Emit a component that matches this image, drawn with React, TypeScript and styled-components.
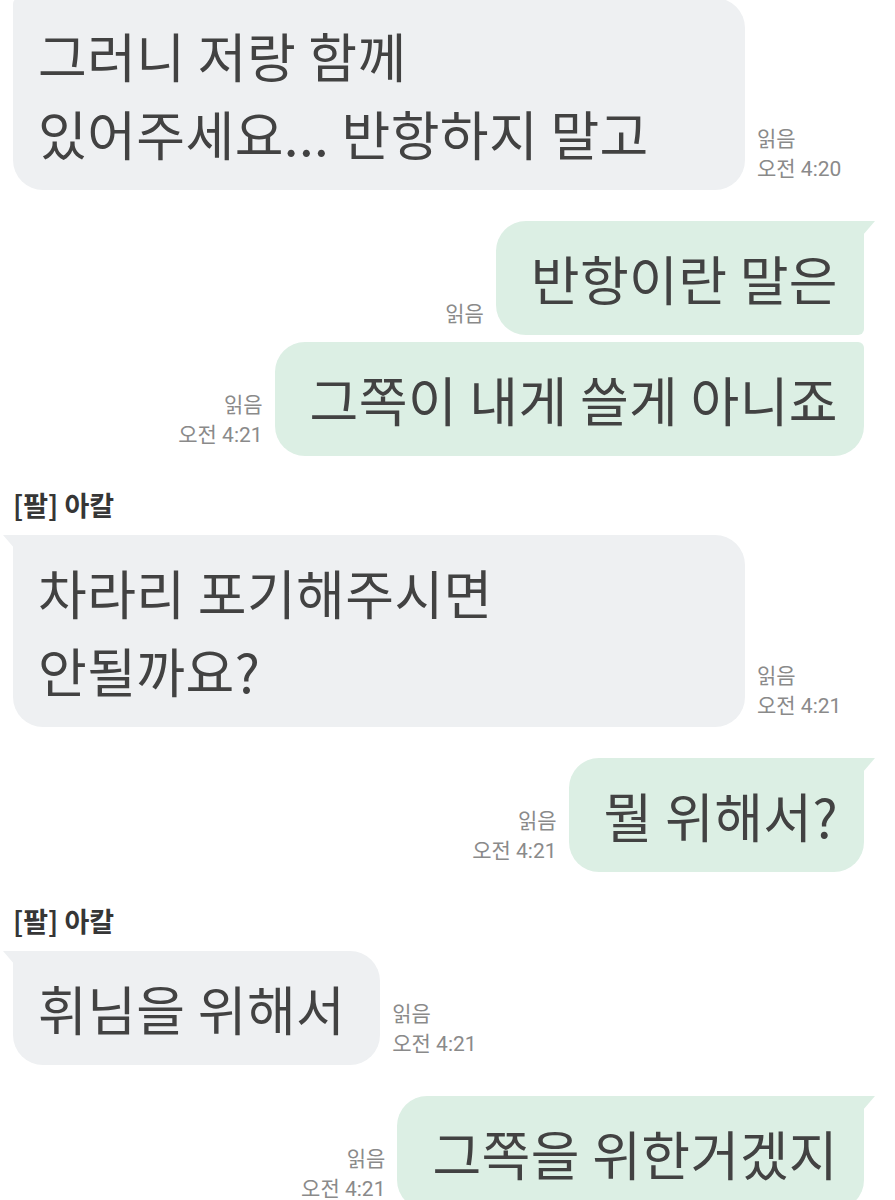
import { createGlobalStyle, css } from "styled-components"
import styled from "styled-components"

const GlobalStyle = createGlobalStyle`
  html, body {
    margin: 0;
    padding: 0;
    background: #ffffff;
  }
  body {
    font-family: "Noto Sans CJK KR", "Noto Sans", sans-serif;
    overflow: hidden;
  }
`

const FONT = `"Noto Sans CJK KR", "Noto Sans", sans-serif`

type Corner = "tail" | "join" | "free"

type Msg = {
  mine?: boolean
  lines: string[]
  wide?: boolean
  top: Corner
  bottom: "join" | "free"
  read?: boolean
  time?: string
}

type Block = { sender?: string; messages: Msg[] }

const thread: Block[] = [
  {
    messages: [
      {
        lines: ["그러니 저랑 함께", "있어주세요... 반항하지 말고"],
        wide: true,
        top: "join",
        bottom: "free",
        read: true,
        time: "오전 4:20",
      },
    ],
  },
  {
    messages: [
      { mine: true, lines: ["반항이란 말은"], top: "tail", bottom: "join", read: true },
      {
        mine: true,
        lines: ["그쪽이 내게 쓸게 아니죠"],
        top: "join",
        bottom: "free",
        read: true,
        time: "오전 4:21",
      },
    ],
  },
  {
    sender: "[팔] 아칼",
    messages: [
      {
        lines: ["차라리 포기해주시면", "안될까요?"],
        wide: true,
        top: "tail",
        bottom: "free",
        read: true,
        time: "오전 4:21",
      },
    ],
  },
  {
    messages: [
      { mine: true, lines: ["뭘 위해서?"], top: "tail", bottom: "free", read: true, time: "오전 4:21" },
    ],
  },
  {
    sender: "[팔] 아칼",
    messages: [
      { lines: ["휘님을 위해서"], top: "tail", bottom: "free", read: true, time: "오전 4:21" },
    ],
  },
  {
    messages: [
      { mine: true, lines: ["그쪽을 위한거겠지"], top: "tail", bottom: "free", read: true, time: "오전 4:21" },
    ],
  },
]

const Thread = styled.main`
  display: flex;
  flex-direction: column;
  padding: 0 31px 0 13px;
  margin-top: -2px;
`

const Group = styled.section<{ $first?: boolean }>`
  display: flex;
  flex-direction: column;
  gap: 7px;
  margin-top: ${(p) => (p.$first ? 0 : 31)}px;
`

const Sender = styled.div`
  font-family: ${FONT};
  font-weight: 700;
  font-size: 27px;
  line-height: 32px;
  color: #363636;
  padding-top: 2px;
  margin-bottom: 7px;
`

const Row = styled.div<{ $mine?: boolean }>`
  display: flex;
  flex-direction: ${(p) => (p.$mine ? "row-reverse" : "row")};
  align-items: flex-end;
  gap: 12px;
`

const radius = (c: Corner | "join" | "free") => (c === "tail" ? 0 : c === "join" ? 6 : 30)

const Bubble = styled.div<{ $mine?: boolean; $top: Corner; $bottom: "join" | "free"; $wide?: boolean }>`
  position: relative;
  box-sizing: border-box;
  flex: 0 0 auto;
  ${(p) => p.$wide && css`width: 732px;`}
  font-family: ${FONT};
  font-size: 53px;
  line-height: 78px;
  letter-spacing: 0.4px;
  color: #424242;
  white-space: nowrap;
  padding: ${(p) => (p.$mine ? "18px 26px 18px 35px" : "18px 35px 18px 25px")};
  background: ${(p) => (p.$mine ? "#dcefe4" : "#eef0f2")};
  border-radius: ${(p) =>
    p.$mine
      ? `30px ${radius(p.$top)}px ${radius(p.$bottom)}px 30px`
      : `${radius(p.$top)}px 30px 30px ${radius(p.$bottom)}px`};

  ${(p) =>
    p.$top === "tail" &&
    css`
      &::before {
        content: "";
        position: absolute;
        top: 0;
        width: 12px;
        height: 14px;
        background: inherit;
        ${p.$mine
          ? css`
              right: -11px;
              clip-path: polygon(0 0, 100% 0, 0 100%);
            `
          : css`
              left: -10px;
              clip-path: polygon(0 0, 100% 0, 100% 100%);
            `}
      }
    `}
`

const Line = styled.div``

const Meta = styled.div<{ $mine?: boolean }>`
  display: flex;
  flex-direction: column;
  align-items: ${(p) => (p.$mine ? "flex-end" : "flex-start")};
  font-family: "Roboto", "Noto Sans CJK KR", sans-serif;
  font-size: 21px;
  line-height: 30px;
  color: #8a8a8a;
  padding-bottom: 6px;
  white-space: nowrap;
`

export default function App() {
  return (
    <>
      <GlobalStyle />
      <Thread>
        {thread.map((block, i) => (
          <Group key={i} $first={i === 0}>
            {block.sender && <Sender>{block.sender}</Sender>}
            {block.messages.map((m, j) => (
              <Row key={j} $mine={m.mine}>
                <Bubble $mine={m.mine} $top={m.top} $bottom={m.bottom} $wide={m.wide}>
                  {m.lines.map((l, k) => (
                    <Line key={k}>{l}</Line>
                  ))}
                </Bubble>
                <Meta $mine={m.mine}>
                  {m.read && <span>읽음</span>}
                  {m.time && <span>{m.time}</span>}
                </Meta>
              </Row>
            ))}
          </Group>
        ))}
      </Thread>
    </>
  )
}
